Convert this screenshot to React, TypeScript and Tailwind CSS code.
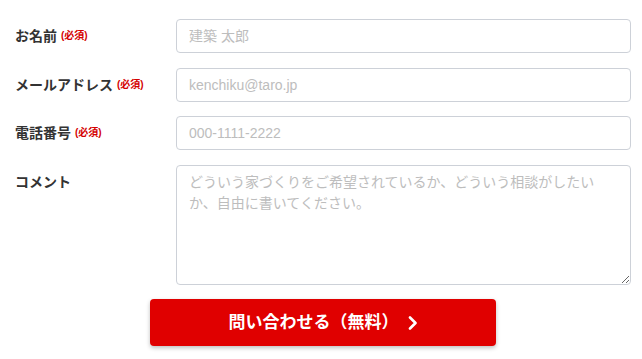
const fontStack = "font-['Liberation_Sans','Noto_Sans_CJK_JP',sans-serif]";

function Required() {
  return <span className="ml-[4px] text-[10px] leading-none font-bold text-[#d40000]">(必須)</span>;
}

function Row({ label, required, children }: { label: string; required?: boolean; children: React.ReactNode }) {
  return (
    <div className="flex items-start">
      <div className="flex h-[34px] w-[161px] shrink-0 items-center">
        <span className="text-[14px] leading-none font-bold text-[#333]">{label}</span>
        {required && <Required />}
      </div>
      <div className="flex-1">{children}</div>
    </div>
  );
}

const inputCls =
  "block w-full h-[34px] rounded-[4px] border border-[#cdd1d8] bg-white px-[12px] text-[14px] text-[#333] placeholder:text-[#bdbdbd] outline-none";

export default function App() {
  return (
    <div className={`min-h-screen bg-white ${fontStack}`}>
      <form className="w-[616px] ml-[15px] pt-[19px] flex flex-col gap-[14.5px]">
        <Row label="お名前" required>
          <input className={inputCls} placeholder="建築 太郎" />
        </Row>
        <Row label="メールアドレス" required>
          <input className={inputCls} placeholder="kenchiku@taro.jp" />
        </Row>
        <Row label="電話番号" required>
          <input className={inputCls} placeholder="000-1111-2222" />
        </Row>
        <Row label="コメント">
          <textarea
            className="block w-full h-[120px] rounded-[4px] border border-[#cdd1d8] bg-white px-[12px] py-[6px] text-[14px] leading-[21px] text-[#333] placeholder:text-[#bdbdbd] outline-none"
            placeholder="どういう家づくりをご希望されているか、どういう相談がしたいか、自由に書いてください。"
          />
        </Row>
        <div className="flex justify-center">
          <button
            type="button"
            className="flex h-[47px] w-[346px] items-center justify-center gap-[9px] rounded-[4px] bg-[#e00000] text-[17px] font-bold text-white shadow-[0_2px_4px_rgba(0,0,0,0.25)]"
          >
            <span>問い合わせる（無料）</span>
            <svg width="10" height="14" viewBox="0 0 10 14" fill="none">
              <path d="M2 1.5L7.5 7L2 12.5" stroke="white" strokeWidth="2.6" strokeLinecap="round" strokeLinejoin="round" />
            </svg>
          </button>
        </div>
      </form>
    </div>
  );
}
